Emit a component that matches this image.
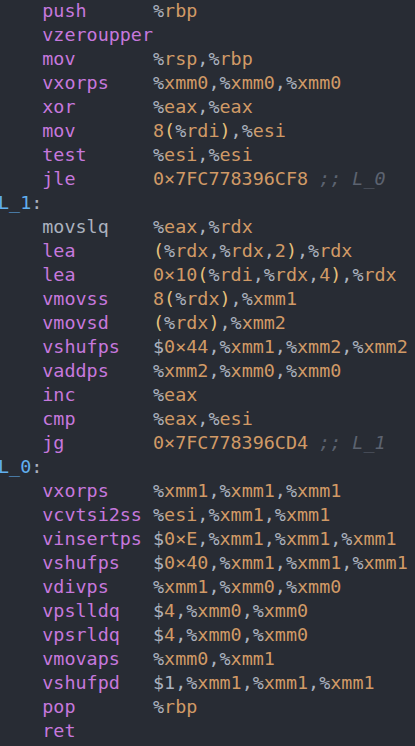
import React from "react";

type Line =
  | { kind: "ins"; op: string; args?: string; comment?: string; plain?: boolean }
  | { kind: "label"; name: string; num: string };

const lines: Line[] = [
  { kind: "ins", op: "push", args: "%rbp" },
  { kind: "ins", op: "vzeroupper" },
  { kind: "ins", op: "mov", args: "%rsp,%rbp" },
  { kind: "ins", op: "vxorps", args: "%xmm0,%xmm0,%xmm0" },
  { kind: "ins", op: "xor", args: "%eax,%eax" },
  { kind: "ins", op: "mov", args: "8(%rdi),%esi" },
  { kind: "ins", op: "test", args: "%esi,%esi" },
  { kind: "ins", op: "jle", args: "0×7FC778396CF8", comment: "L_0" },
  { kind: "label", name: "L_", num: "1" },
  { kind: "ins", op: "movslq", args: "%eax,%rdx", plain: true },
  { kind: "ins", op: "lea", args: "(%rdx,%rdx,2),%rdx" },
  { kind: "ins", op: "lea", args: "0×10(%rdi,%rdx,4),%rdx" },
  { kind: "ins", op: "vmovss", args: "8(%rdx),%xmm1" },
  { kind: "ins", op: "vmovsd", args: "(%rdx),%xmm2" },
  { kind: "ins", op: "vshufps", args: "$0×44,%xmm1,%xmm2,%xmm2" },
  { kind: "ins", op: "vaddps", args: "%xmm2,%xmm0,%xmm0" },
  { kind: "ins", op: "inc", args: "%eax" },
  { kind: "ins", op: "cmp", args: "%eax,%esi" },
  { kind: "ins", op: "jg", args: "0×7FC778396CD4", comment: "L_1" },
  { kind: "label", name: "L_", num: "0" },
  { kind: "ins", op: "vxorps", args: "%xmm1,%xmm1,%xmm1" },
  { kind: "ins", op: "vcvtsi2ss", args: "%esi,%xmm1,%xmm1" },
  { kind: "ins", op: "vinsertps", args: "$0×E,%xmm1,%xmm1,%xmm1" },
  { kind: "ins", op: "vshufps", args: "$0×40,%xmm1,%xmm1,%xmm1" },
  { kind: "ins", op: "vdivps", args: "%xmm1,%xmm0,%xmm0" },
  { kind: "ins", op: "vpslldq", args: "$4,%xmm0,%xmm0" },
  { kind: "ins", op: "vpsrldq", args: "$4,%xmm0,%xmm0" },
  { kind: "ins", op: "vmovaps", args: "%xmm0,%xmm1" },
  { kind: "ins", op: "vshufpd", args: "$1,%xmm1,%xmm1,%xmm1" },
  { kind: "ins", op: "pop", args: "%rbp" },
  { kind: "ins", op: "ret" },
];

function Args({ s }: { s: string }) {
  const parts = s.match(/0×[0-9A-Fa-f]+|[a-z]+\d*|\d+|./g) || [];
  return (
    <>
      {parts.map((p, i) => {
        let cls = "text-[#abb2bf]";
        if (p === "(" || p === ")") cls = "text-[#e5c07b]";
        else if (p === "%" || p === "," || p === "$") cls = "text-[#abb2bf]";
        else if (p === "1" && parts[i - 1] === "$") cls = "text-[#abb2bf]";
        else cls = "text-[#d19a66]";
        return (
          <span key={i} className={cls}>
            {p}
          </span>
        );
      })}
    </>
  );
}

export default function App() {
  return (
    <div className="w-[415px] h-[746px] overflow-hidden bg-[#282c34]">
      <div
        className="ml-[-2px] mt-[-1px] text-[18.4px] leading-[24px] whitespace-pre"
        style={{ fontFamily: '"DejaVu Sans Mono", "Liberation Mono", monospace' }}
      >
        {lines.map((l, i) =>
          l.kind === "label" ? (
            <div key={i} className="h-[24px]">
              <span className="text-[#61afef]">{l.name}</span>
              <span className="text-[#61afef]">{l.num}</span>
              <span className="text-[#abb2bf]">:</span>
            </div>
          ) : (
            <div key={i} className="h-[24px]">
              <span>{"    "}</span>
              <span className={l.plain ? "text-[#abb2bf]" : "text-[#c678dd]"}>
                {l.args ? l.op.padEnd(10, " ") : l.op}
              </span>
              {l.args && <Args s={l.args} />}
              {l.comment && (
                <span className="italic text-[#5c6370]">{" ;; " + l.comment}</span>
              )}
            </div>
          )
        )}
      </div>
    </div>
  );
}
